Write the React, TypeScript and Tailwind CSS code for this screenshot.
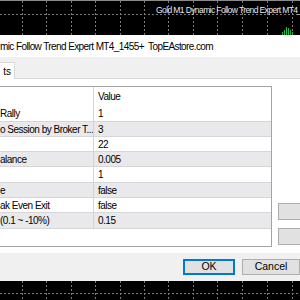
import React from "react"

const rows: { name: string; value: string; h: string; gray: boolean }[] = [
  { name: "Rally", value: "1", h: "h-[17px]", gray: false },
  { name: "o Session by Broker T...", value: "3", h: "h-[15px]", gray: true },
  { name: "", value: "22", h: "h-[15px]", gray: false },
  { name: "alance", value: "0.005", h: "h-[15px]", gray: true },
  { name: "", value: "1", h: "h-[16px]", gray: false },
  { name: "e", value: "false", h: "h-[15px]", gray: true },
  { name: "ak Even Exit", value: "false", h: "h-[15px]", gray: false },
  { name: "(0.1 ~ -10%)", value: "0.15", h: "h-[16px]", gray: true },
]

const gridX = [22, 46, 71, 95, 120, 144, 168, 193, 217, 242, 267, 292]

function ChartGrid({ y }: { y: number }) {
  return (
    <svg className="absolute inset-0" width="300" height="40">
      <line x1="0" y1={y} x2="300" y2={y} stroke="#7a7a7a" strokeWidth="1" strokeDasharray="2 2" />
      {gridX.map((x) => (
        <line key={x} x1={x + 0.5} y1="0" x2={x + 0.5} y2="40" stroke="#7a7a7a" strokeWidth="1" strokeDasharray="2 2" />
      ))}
    </svg>
  )
}

export default function App() {
  return (
    <div className="w-[300px] h-[300px] overflow-hidden bg-black flex flex-col" style={{ fontFamily: '"Liberation Sans", Arial, sans-serif' }}>
      {/* chart top */}
      <div className="relative h-[35px] shrink-0 overflow-hidden border-t border-[#8a8a8a]">
        <ChartGrid y={13.5} />
        <div className="absolute left-[156px] top-[3px] whitespace-nowrap text-[8.5px] tracking-[-0.6px] text-[#e8e8e8]">Gold M1 Dynamic Follow Trend Expert MT4_</div>
        <svg className="absolute left-[281px] top-[25px]" width="16" height="10">
          <rect x="1" y="6" width="1" height="4" fill="#1fa83a" />
          <rect x="3" y="4" width="1" height="6" fill="#22b14c" />
          <rect x="5" y="1" width="1" height="9" fill="#27c04e" />
          <rect x="7" y="2" width="1" height="8" fill="#22b14c" />
          <rect x="9" y="4" width="1" height="6" fill="#1fa83a" />
          <rect x="11" y="6" width="1" height="4" fill="#22b14c" />
        </svg>
      </div>

      {/* dialog */}
      <div className="flex-1 flex flex-col bg-[#f0f0f0] text-black">
        <div className="h-[22px] shrink-0 bg-white flex items-center whitespace-nowrap text-[10px] tracking-[-0.6px] pl-0">mic Follow Trend Expert MT4_1455+&nbsp; TopEAstore.com</div>

        <div className="h-[22px] shrink-0 flex items-end">
          <div className="h-[17px] w-[15px] bg-white border-r border-t border-[#d9d9d9] text-[10px] flex items-center justify-end pr-[3px]">ts</div>
          <div className="flex-1 border-b border-[#d9d9d9]" />
        </div>

        <div className="h-[174px] shrink-0 bg-white flex pt-[7px]">
          <div className="w-[272px] h-[161px] shrink-0 border border-l-0 border-[#a3a3a3] bg-white flex flex-col text-[10px] tracking-[-0.5px] relative">
            <div className="absolute left-[93px] top-0 bottom-[17px] w-px bg-[#d4d4d4]" />
            <div className="h-[18px] flex items-center shrink-0">
              <div className="w-[93px]" />
              <div className="pl-[5px]">Value</div>
            </div>
            {rows.map((r, i) => (
              <div key={i} className={`${r.h} shrink-0 flex items-center border-b border-[#d6d6d6] ${r.gray ? "bg-[#e9e9eb]" : "bg-white"}`}>
                <div className="w-[93px] whitespace-nowrap overflow-hidden">{r.name}</div>
                <div className="pl-[5px]">{r.value}</div>
              </div>
            ))}
          </div>
          <div className="flex-1 flex flex-col gap-[8px] pl-[6px] pt-[117px]">
            <div className="h-[17px] w-[40px] bg-[#e1e1e1] border border-[#adadad]" />
            <div className="h-[17px] w-[40px] bg-[#e1e1e1] border border-[#adadad]" />
          </div>
        </div>

        <div className="h-[28px] shrink-0 flex items-start pt-[6px] pl-[183px] gap-[7px] text-[10.5px]">
          <div className="w-[56px] h-[16px] bg-[#e1e1e1] border-2 border-[#0078d7] flex items-center justify-center">OK</div>
          <div className="w-[58px] h-[16px] shrink-0 bg-[#e1e1e1] border border-[#adadad] flex items-center justify-center">Cancel</div>
        </div>
      </div>

      {/* chart bottom */}
      <div className="relative h-[19px] shrink-0 overflow-hidden">
        <ChartGrid y={12.5} />
      </div>
    </div>
  )
}
